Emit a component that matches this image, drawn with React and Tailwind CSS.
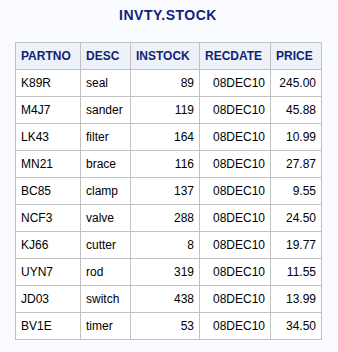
const rows = [
  ["K89R", "seal", "89", "08DEC10", "245.00"],
  ["M4J7", "sander", "119", "08DEC10", "45.88"],
  ["LK43", "filter", "164", "08DEC10", "10.99"],
  ["MN21", "brace", "116", "08DEC10", "27.87"],
  ["BC85", "clamp", "137", "08DEC10", "9.55"],
  ["NCF3", "valve", "288", "08DEC10", "24.50"],
  ["KJ66", "cutter", "8", "08DEC10", "19.77"],
  ["UYN7", "rod", "319", "08DEC10", "11.55"],
  ["JD03", "switch", "438", "08DEC10", "13.99"],
  ["BV1E", "timer", "53", "08DEC10", "34.50"],
];

const headers = ["PARTNO", "DESC", "INSTOCK", "RECDATE", "PRICE"];

export default function App() {
  return (
    <div className="w-[338px] h-[352px] bg-[#fafbfe] font-['Liberation_Sans',Arial,sans-serif]">
      <div className="w-[306px] ml-[15px] pt-[7px] text-center text-[14px] leading-[16px] font-bold tracking-[0.5px] text-[#112277]">
        INVTY.STOCK
      </div>
      <table className="mt-[19px] ml-[15px] w-[306px] table-fixed border-collapse text-[12px] leading-[14px]">
        <colgroup>
          <col className="w-[65px]" />
          <col className="w-[50px]" />
          <col className="w-[69px]" />
          <col className="w-[71px]" />
          <col className="w-[51px]" />
        </colgroup>
        <thead>
          <tr className="h-[27px] bg-[#edf2f9]">
            {headers.map((h) => (
              <th key={h} className="border border-[#c1c1c1] px-[5px] text-left font-bold text-[#112277]">
                {h}
              </th>
            ))}
          </tr>
        </thead>
        <tbody>
          {rows.map((r) => (
            <tr key={r[0]} className="h-[27px] bg-white text-black">
              <td className="border border-[#c1c1c1] px-[5px] text-left">{r[0]}</td>
              <td className="border border-[#c1c1c1] px-[5px] text-left">{r[1]}</td>
              <td className="border border-[#c1c1c1] px-[5px] text-right">{r[2]}</td>
              <td className="border border-[#c1c1c1] px-[5px] text-right">{r[3]}</td>
              <td className="border border-[#c1c1c1] px-[5px] text-right">{r[4]}</td>
            </tr>
          ))}
        </tbody>
      </table>
    </div>
  );
}
